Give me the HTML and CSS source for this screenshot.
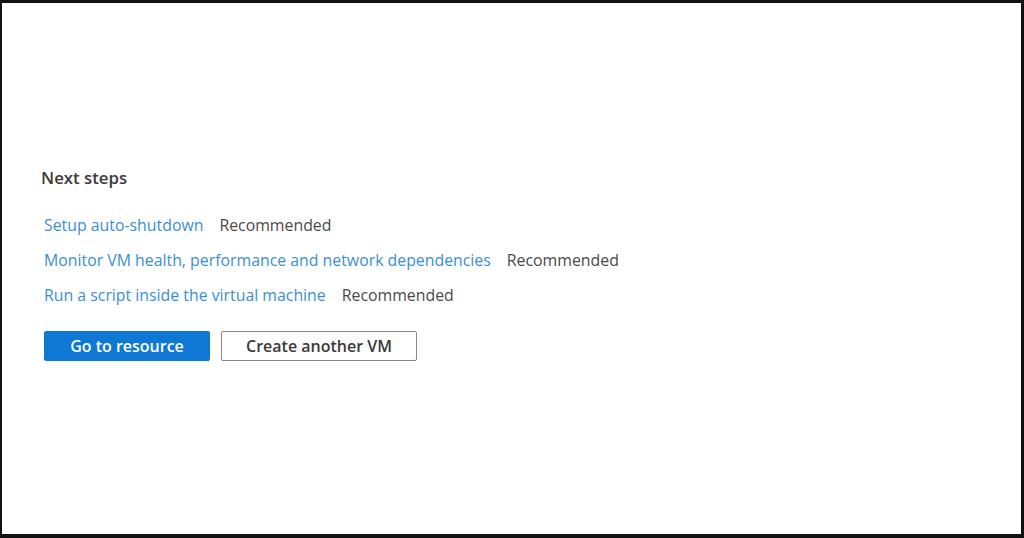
FILE: index.html
```html
<!DOCTYPE html>
<html>
<head>
<meta charset="utf-8">
<link rel="stylesheet" href="styles.css">
</head>
<body>
<div class="frame">
  <section class="next-steps">
    <h2 class="title">Next steps</h2>
    <ul class="steps">
      <li class="step"><a class="link" href="#">Setup auto-shutdown</a><span class="tag">Recommended</span></li>
      <li class="step"><a class="link" href="#">Monitor VM health, performance and network dependencies</a><span class="tag">Recommended</span></li>
      <li class="step"><a class="link" href="#">Run a script inside the virtual machine</a><span class="tag">Recommended</span></li>
    </ul>
    <div class="actions">
      <button class="btn btn-primary">Go to resource</button>
      <button class="btn btn-secondary">Create another VM</button>
    </div>
  </section>
</div>
</body>
</html>
```

FILE: styles.css
```css
* { box-sizing: border-box; }
html, body { margin: 0; padding: 0; background: #000; }
body {
  width: 1024px;
  height: 538px;
  font-family: "Open Sans", "Noto Sans", sans-serif;
}
.frame {
  width: 1024px;
  height: 538px;
  background: #fff;
  border-style: solid;
  border-color: #111;
  border-width: 3px 3px 4px 2px;
  padding: 163px 0 0 39px;
}
.title {
  margin: 0;
  font-size: 16.8px;
  font-weight: 600;
  color: #3b3a39;
  line-height: 24px;
}
.steps {
  list-style: none;
  margin: 23px 0 0 0;
  padding: 0 0 0 3px;
}
.step {
  display: flex;
  gap: 16px;
  height: 35px;
  line-height: 24px;
  font-size: 15.85px;
}
.link {
  color: #3a8fd4;
  text-decoration: none;
}
.tag { color: #4a4a4a; }
.actions {
  display: flex;
  gap: 11px;
  margin: 13px 0 0 3px;
}
.btn {
  height: 30px;
  font-family: inherit;
  font-size: 16px;
  font-weight: 600;
  border-radius: 2px;
  padding: 0;
}
.btn-primary {
  width: 166px;
  background: #0f78d4;
  color: #fff;
  border: 1px solid #0f78d4;
}
.btn-secondary {
  width: 196px;
  background: #fff;
  color: #3b3a39;
  border: 1px solid #8a8886;
}
```
